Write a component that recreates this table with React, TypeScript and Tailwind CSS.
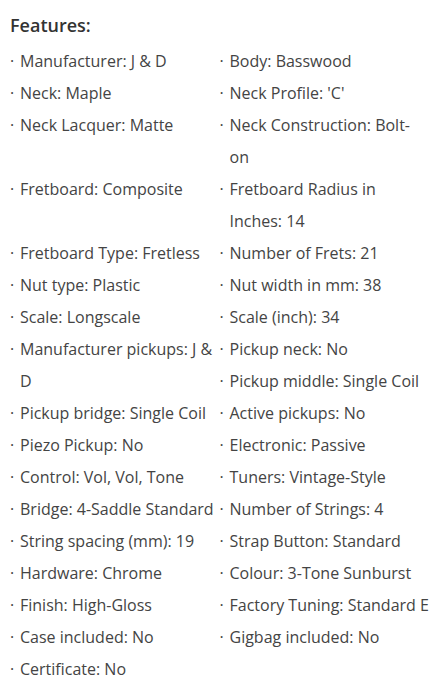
import React from "react";

const features: string[] = [
  "Manufacturer: J & D",
  "Body: Basswood",
  "Neck: Maple",
  "Neck Profile: 'C'",
  "Neck Lacquer: Matte",
  "Neck Construction: Bolt-on",
  "Fretboard: Composite",
  "Fretboard Radius in Inches: 14",
  "Fretboard Type: Fretless",
  "Number of Frets: 21",
  "Nut type: Plastic",
  "Nut width in mm: 38",
  "Scale: Longscale",
  "Scale (inch): 34",
  "Manufacturer pickups: J & D",
  "Pickup neck: No",
  "Pickup middle: Single Coil",
  "Pickup bridge: Single Coil",
  "Active pickups: No",
  "Piezo Pickup: No",
  "Electronic: Passive",
  "Control: Vol, Vol, Tone",
  "Tuners: Vintage-Style",
  "Bridge: 4-Saddle Standard",
  "Number of Strings: 4",
  "String spacing (mm): 19",
  "Strap Button: Standard",
  "Hardware: Chrome",
  "Colour: 3-Tone Sunburst",
  "Finish: High-Gloss",
  "Factory Tuning: Standard E",
  "Case included: No",
  "Gigbag included: No",
  "Certificate: No",
];

export default function App() {
  return (
    <div
      className="min-h-screen bg-white pl-[10px] pt-[11px] text-[#444]"
      style={{ fontFamily: "'Open Sans', sans-serif" }}
    >
      <h3 className="mb-[6px] text-[18px] font-semibold leading-[28px] text-[#333]">
        Features:
      </h3>
      {/* floated halves, like the original list: tall items push the next one across */}
      <ul className="w-[419px] text-[16px] leading-[32px] after:clear-both after:block after:content-['']">
        {features.map((f) => (
          <li key={f} className="float-left flex w-1/2 list-none">
            <span className="w-[10px] shrink-0">·</span>
            <span>{f}</span>
          </li>
        ))}
      </ul>
    </div>
  );
}
